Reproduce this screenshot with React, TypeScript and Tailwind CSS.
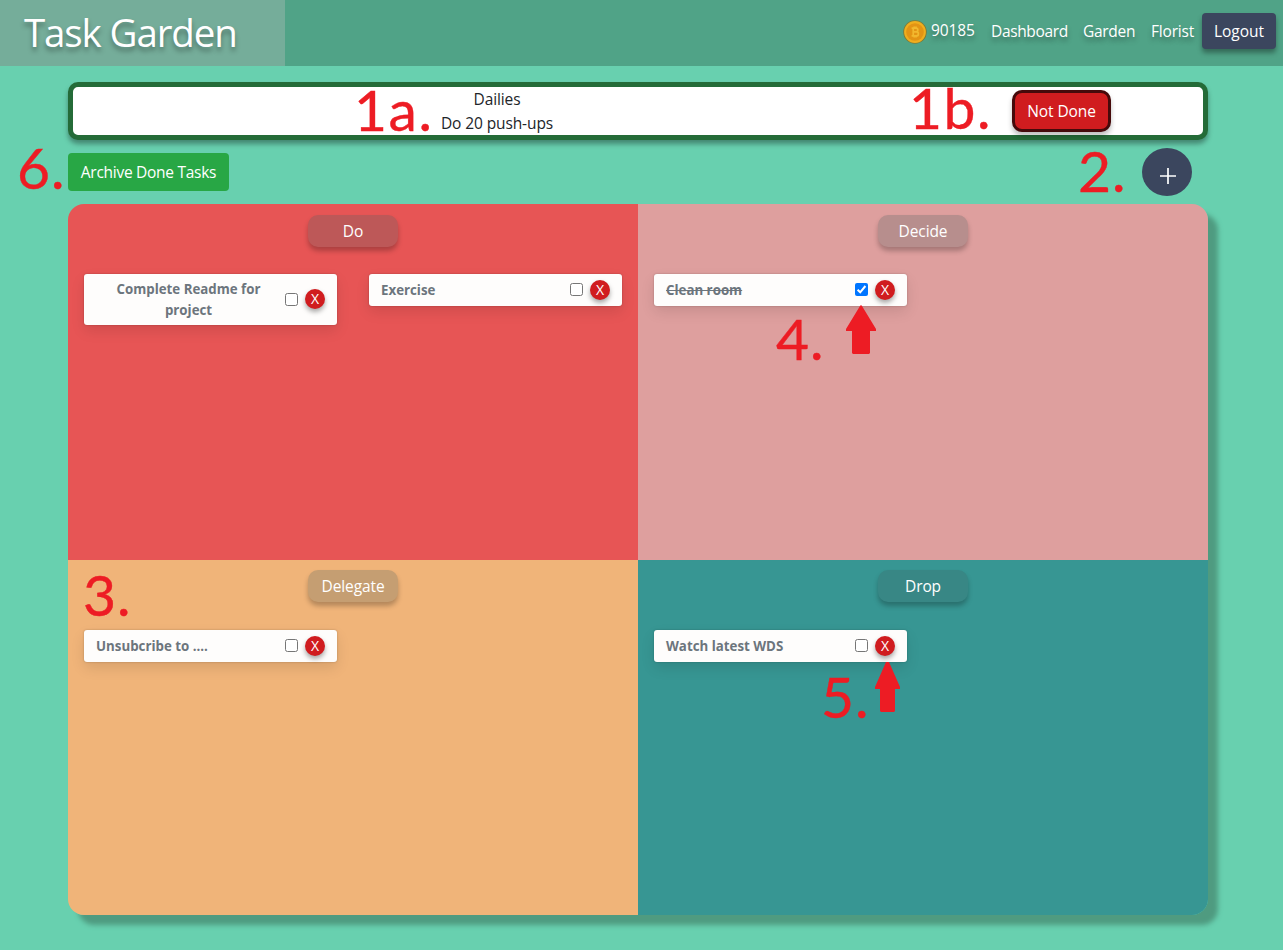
import React from "react";

type Task = { title: string; done?: boolean };

function TaskCard({ title, done = false }: Task) {
  const wraps = title.length > 20;
  return (
    <div className="flex w-[253px] items-center self-start rounded-[3px] bg-[#fefdfc] pr-3 pl-3 shadow-[0_6px_14px_rgba(0,0,0,0.1),0_0_2px_rgba(0,0,0,0.25)]">
      <div
        className={
          wraps
            ? "w-[185px] pt-[5px] pb-1 text-center text-[13.3px] leading-[21px] font-bold text-[#6c757d]"
            : "w-[185px] pt-[6px] pb-[5px] text-[13.3px] leading-[21px] font-bold text-[#6c757d]"
        }
      >
        <span className={done ? "line-through" : ""}>{title}</span>
      </div>
      <div className="mb-px ml-auto flex items-center gap-[7px]">
        {done ? (
          <span className="flex size-[13px] items-center justify-center rounded-[2px] bg-[#0075ff]">
            <svg viewBox="0 0 13 13" className="size-[13px]" fill="none" stroke="white" strokeWidth="2">
              <path d="M2.6 6.8 5.2 9.3 10.4 3" />
            </svg>
          </span>
        ) : (
          <span className="size-[13px] rounded-[2.5px] border border-[#767676] bg-white" />
        )}
        <button className="flex size-5 items-center justify-center rounded-full bg-[#d01c1f] text-[14px] leading-5 text-white shadow-[0_3px_5px_rgba(0,0,0,0.35)]">
          X
        </button>
      </div>
    </div>
  );
}

function Quadrant({ name, color, badge, tasks }: { name: string; color: string; badge: string; tasks: Task[] }) {
  return (
    <section className={`flex flex-col items-center ${color}`}>
      <h2
        className={`flex h-8 w-[90px] items-center justify-center rounded-[10px] pt-0.5 text-[15.5px] tracking-[-0.1px] text-white shadow-[0_4px_5px_rgba(0,0,0,0.25)] ${badge}`}
      >
        {name}
      </h2>
      <div className="flex w-full gap-8 px-4">
        {tasks.map((t) => (
          <TaskCard key={t.title} {...t} />
        ))}
      </div>
    </section>
  );
}

function Coin() {
  return (
    <svg viewBox="0 0 24 24" className="mt-px -ml-px size-6">
      <circle cx="12" cy="12" r="11.8" fill="#7d7a38" />
      <circle cx="12" cy="12" r="10.9" fill="#f0ae1e" />
      <circle cx="12" cy="12" r="8.8" fill="#e39414" />
      <path
        d="M8.600 8.200h4.400a1.800 1.800 0 0 1 0 3.700H10.200h3.200a2 2 0 0 1 0 4H8.600M10.200 8.200v7.700M11.200 6.500v1.700M13 6.500v1.700M11.200 15.900v1.700M13 15.900v1.700"
        fill="none"
        stroke="#f2b82e"
        strokeWidth="1.7"
      />
    </svg>
  );
}

function Note({ text, place }: { text: string; place: string }) {
  return (
    <span className={`absolute font-['Lato',sans-serif] text-[57px] leading-[58px] whitespace-nowrap text-[#ed1c24] [-webkit-text-stroke:0.4px_#ed1c24] ${place}`}>
      {text}
    </span>
  );
}

export default function App() {
  return (
    <div className="relative h-[950px] w-[1283px] overflow-hidden bg-[#68d0af] font-['Open_Sans','Noto_Sans',sans-serif] text-[15.5px] text-[#212529]">
      <header className="flex h-[66px] items-center bg-[#50a387] text-white">
        <div className="flex h-full w-[285px] items-center bg-[#75ad9a] pb-px pl-6">
          <h1 className="text-[38.5px] leading-none tracking-[-1.12px] [text-shadow:0_4px_5px_rgba(0,0,0,0.35)]">Task Garden</h1>
        </div>
        <nav className="mr-[7px] mb-1 ml-auto flex items-center [text-shadow:0_4px_5px_rgba(0,0,0,0.35)]">
          <Coin />
          <span className="ml-1 w-[60px] tracking-[-0.1px]">90185</span>
          <a className="w-[92px] pt-0.5 tracking-[-0.35px]">Dashboard</a>
          <a className="w-[68px] pt-0.5 tracking-[-0.3px]">Garden</a>
          <a className="w-[51px] pt-0.5 tracking-[-0.2px]">Florist</a>
          <button className="flex h-9 w-[74px] items-center justify-center rounded bg-[#3b465e] pt-0.5 shadow-[0_4px_5px_rgba(0,0,0,0.35)] [text-shadow:none]">
            Logout
          </button>
        </nav>
      </header>

      <main className="mx-[68px] flex w-[1140px] flex-col pt-4">
        <section className="flex h-[58px] items-center rounded-[10px] border-[5px] border-[#246b38] bg-white shadow-[0_4px_5px_rgba(0,0,0,0.35)]">
          <div className="w-[848px] text-center leading-6 tracking-[-0.1px]">
            <p>Dailies</p>
            <p>Do 20 push-ups</p>
          </div>
          <button className="ml-[91px] flex h-[42px] w-[99px] items-center justify-center rounded-[10px] border-[3px] border-[#460a0b] bg-[#d01c1f] pt-0.5 tracking-[-0.1px] text-white shadow-[0_4px_5px_rgba(0,0,0,0.25)]">
            Not Done
          </button>
        </section>

        <div className="flex h-16 items-center justify-between pr-4">
          <button className="h-[38px] w-[161px] rounded bg-[#28a745] pt-0.5 tracking-[-0.28px] text-white">Archive Done Tasks</button>
          <button className="flex h-12 w-[50px] items-center justify-center rounded-[50%] bg-[#3b465e] pt-[7px] pl-px">
            <svg viewBox="0 0 16 16" className="size-4" stroke="white" strokeWidth="1.7">
              <path d="M0 8h16M8 0v16" />
            </svg>
          </button>
        </div>

        <div className="grid h-[711px] grid-cols-2 grid-rows-[356px_355px] rounded-[16px] shadow-[10px_10px_5px_#4f9b80]">
          <Quadrant
            name="Do"
            color="gap-[27px] rounded-tl-[16px] bg-[#e75555] pt-[11px]"
            badge="bg-[#bd5858]"
            tasks={[{ title: "Complete Readme for project" }, { title: "Exercise" }]}
          />
          <Quadrant
            name="Decide"
            color="gap-[27px] rounded-tr-[16px] bg-[#de9f9e] pt-[11px]"
            badge="bg-[#b78e8d]"
            tasks={[{ title: "Clean room", done: true }]}
          />
          <Quadrant
            name="Delegate"
            color="gap-7 rounded-bl-[16px] bg-[#f0b479] pt-2.5"
            badge="bg-[#c59e72]"
            tasks={[{ title: "Unsubcribe to ...." }]}
          />
          <Quadrant
            name="Drop"
            color="gap-7 rounded-br-[16px] bg-[#379693] pt-2.5"
            badge="bg-[#388785]"
            tasks={[{ title: "Watch latest WDS" }]}
          />
        </div>
      </main>

      <Note text="1a." place="left-[354px] top-[80px] tracking-[1.5px]" />
      <Note text="1b." place="left-[909px] top-[78px] tracking-[1.5px]" />
      <Note text="2." place="left-[1078px] top-[141px] tracking-[1px]" />
      <Note text="3." place="left-[83px] top-[565px] tracking-[1px]" />
      <Note text="4." place="left-[776px] top-[309px] tracking-[1px]" />
      <Note text="5." place="left-[821px] top-[667px] tracking-[1px]" />
      <Note text="6." place="left-[17px] top-[138px] tracking-[1px]" />
      <svg viewBox="0 0 30 49" className="absolute top-[305px] left-[846px] h-[49px] w-[30px]" fill="#ed1c24">
        <path d="M15 0 16 1 30 24v2H24v22l-1 1H7l-1-1V26H0v-2L14 1z" />
      </svg>
      <svg viewBox="0 0 25 50" className="absolute top-[662px] left-[875px] h-[50px] w-[25px]" fill="#ed1c24">
        <path d="M11 0h3L25 25v2H20v22l-1 1H6l-1-1V27H0v-2z" />
      </svg>
    </div>
  );
}
